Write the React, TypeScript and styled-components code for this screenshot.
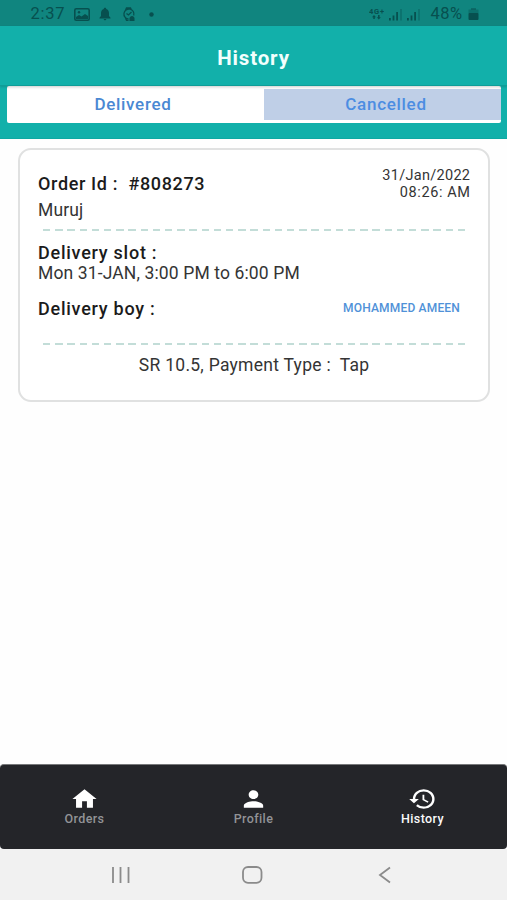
import React from "react";
import styled, { createGlobalStyle } from "styled-components";
import { MdHome, MdPerson, MdHistory } from "react-icons/md";

const GlobalStyle = createGlobalStyle`
  * { box-sizing: border-box; }
  body { margin: 0; background: #fff; font-family: Roboto, "Liberation Sans", sans-serif; }
`;

const Screen = styled.div`
  display: flex;
  flex-direction: column;
  width: 507px;
  height: 900px;
  overflow: hidden;
  background: #fefefe;
`;

const StatusBar = styled.div`
  display: flex;
  justify-content: space-between;
  flex: none;
  height: 26px;
  padding: 2px 28.5px 0 30.5px;
  background: #10857f;
  color: #07504f;
`;

const StatusGroup = styled.div`
  display: flex;
  align-items: center;
  height: 24px;
`;

const StatusText = styled.span<{ $spacing: number }>`
  font-size: 16.5px;
  line-height: 24px;
  letter-spacing: ${(p) => p.$spacing}px;
  white-space: pre;
`;

const StatusIcon = styled.svg<{ $left: number }>`
  display: block;
  flex: none;
  margin-left: ${(p) => p.$left}px;
`;

const Header = styled.header`
  flex: none;
  height: 113px;
  background: #12b0aa;
  border-bottom: 1px solid #0fa8a3;
`;

const TitleBar = styled.div`
  height: 60px;
  padding-top: 20px;
  text-align: center;
  border-bottom: 1px solid #0f9d98;
  box-shadow: 0 1px 2px rgba(0, 0, 0, 0.15);
`;

const Title = styled.h1`
  margin: 0;
  color: #f2fffd;
  font-size: 20.5px;
  font-weight: 700;
  line-height: 24px;
  letter-spacing: 0.85px;
`;

const Tabs = styled.div`
  display: flex;
  width: 494px;
  height: 37px;
  margin-left: 7px;
  padding: 3px 0;
  border-radius: 2px;
  background: #fff;
  box-shadow: inset 0 3px 3px -2px rgba(0, 0, 0, 0.2);
`;

const Tab = styled.button<{ $active?: boolean }>`
  width: ${(p) => (p.$active ? 237 : 257)}px;
  height: 31px;
  padding: ${(p) => (p.$active ? "0 0 2px 7px" : "0 5px 2px 0")};
  border: 0;
  background: ${(p) => (p.$active ? "#bfcfe7" : "transparent")};
  color: ${(p) => (p.$active ? "#4c8de2" : "#4a88d3")};
  font: 500 17px/28px Roboto, sans-serif;
  letter-spacing: 0.7px;
`;

const Content = styled.main`
  flex: 1;
  padding: 9px 17px 0 18px;
`;

const Card = styled.article`
  height: 254px;
  padding: 15px 18px 0;
  border: 2px solid #e0e1e1;
  border-radius: 13px;
  background: #fff;
`;

const Row = styled.div<{ $height: number }>`
  display: flex;
  justify-content: space-between;
  height: ${(p) => p.$height}px;
`;

const OrderInfo = styled.div`
  padding-top: 7px;
`;

const DateInfo = styled.div`
  display: flex;
  flex-direction: column;
  align-items: flex-end;
  padding-top: 1.5px;
`;

const Line = styled.div<{
  $size?: number;
  $height?: number;
  $spacing: number;
  $bold?: boolean;
}>`
  color: ${(p) => (p.$bold ? "#1b1b1b" : "#343434")};
  font-size: ${(p) => p.$size ?? 17.5}px;
  font-weight: ${(p) => (p.$bold ? 500 : 400)};
  line-height: ${(p) => p.$height ?? 20}px;
  letter-spacing: ${(p) => p.$spacing}px;
  margin-right: -${(p) => p.$spacing}px;
  white-space: pre;
`;

const DashedRule = styled.div`
  width: 422px;
  height: 2px;
  margin-left: 5px;
  background: repeating-linear-gradient(90deg, #c3ddd8 0 7.4px, transparent 7.4px 12.2px);
`;

const Slot = styled.div`
  padding-top: 12px;
  height: 67.5px;
`;

const Courier = styled.span`
  padding-right: 10px;
  color: #4f91d8;
  font-size: 12px;
  font-weight: 500;
  line-height: 18px;
  letter-spacing: 0.18px;
`;

const Payment = styled.div`
  display: flex;
  justify-content: center;
  padding-top: 10px;
`;

const BottomNav = styled.nav`
  display: grid;
  grid-template-columns: repeat(3, 1fr);
  flex: none;
  height: 85px;
  padding-top: 21px;
  border-top: 1px solid #77787a;
  border-radius: 4px;
  background: #242529;
`;

const NavItem = styled.a<{ $active?: boolean }>`
  display: flex;
  flex-direction: column;
  align-items: center;
  color: ${(p) => (p.$active ? "#fafafa" : "#929396")};
  font-size: 12.5px;
  font-weight: 500;
  line-height: 14px;
  letter-spacing: 0.4px;

  svg {
    display: block;
    width: 29px;
    height: 26px;
    color: #fff;
  }
`;

const SystemBar = styled.div`
  display: flex;
  flex: none;
  height: 51px;
  padding: 17px 0 0 111px;
  background: #f1f1f1;
`;

const SystemKey = styled.svg<{ $gap?: number }>`
  display: block;
  flex: none;
  margin-left: ${(p) => p.$gap ?? 0}px;
  fill: none;
  stroke: #8b8b8b;
  stroke-width: 1.8;
`;

const Signal = ({ left }: { left: number }) => (
  <StatusIcon $left={left} width="14" height="13" viewBox="0 0 14 13" fill="currentColor">
    <rect x="0" y="10" width="1.8" height="2.5" />
    <rect x="3.6" y="7.5" width="1.8" height="5" />
    <rect x="7.2" y="4" width="1.8" height="8.5" />
    <rect x="11.2" y="1" width="1.6" height="11.5" opacity=".4" />
  </StatusIcon>
);

export default function App() {
  return (
    <>
      <GlobalStyle />
      <Screen>
        <StatusBar>
          <StatusGroup>
            <StatusText $spacing={0.75}>2:37</StatusText>
            <StatusIcon $left={8.5} width="16" height="13" viewBox="0 0 16 13">
              <rect x=".8" y=".8" width="14.4" height="11.4" rx="1.5" fill="none" stroke="currentColor" strokeWidth="1.6" />
              <path d="M2 11V9l3-2 2.5 1.5L11 6l3 2v3z" fill="currentColor" />
              <circle cx="5" cy="4.2" r="1.2" fill="currentColor" />
            </StatusIcon>
            <StatusIcon $left={9.5} width="12" height="14" viewBox="0 0 12 14" fill="currentColor">
              <path d="M6 .7c.8 0 1.2.5 1.2 1.2C9 2.5 10 4 10 6v3l1.5 1.7v.7H.5v-.7L2 9V6c0-2 1-3.5 2.8-4.1C4.8 1.2 5.2.7 6 .7zM4.6 12h2.8c-.2.9-.7 1.3-1.4 1.3s-1.2-.4-1.4-1.3z" />
            </StatusIcon>
            <StatusIcon $left={10.5} width="14" height="15" viewBox="0 0 14 15" fill="none" stroke="currentColor" strokeWidth="1.3">
              <path d="M11.7 8.5A5 5 0 1 0 6.5 12M3.5 3l1-2h4l1 2M3.5 11l1 2.3h2M4.5 6.5l2 1.5 3-3" />
              <path d="M7.5 14v-2.5c0-3.5 5-3.5 5 0V14z" fill="currentColor" stroke="none" />
            </StatusIcon>
            <StatusIcon $left={13.5} width="5" height="5" viewBox="0 0 5 5" fill="currentColor">
              <circle cx="2.5" cy="2.5" r="2.2" />
            </StatusIcon>
          </StatusGroup>
          <StatusGroup>
            <StatusIcon $left={0} width="15" height="14" viewBox="0 0 15 14" fill="currentColor">
              <text x="0" y="6.5" fontSize="7.5" fontWeight="700" fontFamily="Roboto" textLength="15">4G+</text>
              <path d="M5 8l2 2.3H5.8V12H4.3v-1.7H3zM9.8 12.5l-2-2.3H9V8h1.6v2.2h1.2z" />
            </StatusIcon>
            <Signal left={4.5} />
            <Signal left={4.5} />
            <StatusText $spacing={0.45}>{"  48%"}</StatusText>
            <StatusIcon $left={5} width="11" height="14" viewBox="0 0 11 14" fill="currentColor">
              <rect x="3" y="1" width="5" height="2" opacity=".5" />
              <rect x=".5" y="2.5" width="10" height="4" opacity=".4" />
              <rect x=".5" y="6" width="10" height="7" rx="1" />
            </StatusIcon>
          </StatusGroup>
        </StatusBar>
        <Header>
          <TitleBar>
            <Title>History</Title>
          </TitleBar>
          <Tabs>
            <Tab>Delivered</Tab>
            <Tab $active>Cancelled</Tab>
          </Tabs>
        </Header>
        <Content>
          <Card>
            <Row $height={64}>
              <OrderInfo>
                <Line $bold $size={18} $height={24} $spacing={0.65}>{"Order Id :  #808273"}</Line>
                <Line $height={28} $spacing={0.1}>Muruj</Line>
              </OrderInfo>
              <DateInfo>
                <Line $size={14.5} $height={17} $spacing={0.3}>31/Jan/2022</Line>
                <Line $size={14.5} $height={17} $spacing={0.6}>08:26: AM</Line>
              </DateInfo>
            </Row>
            <DashedRule />
            <Slot>
              <Line $bold $size={18} $spacing={0.75}>Delivery slot :</Line>
              <Line $spacing={0.13}>Mon 31-JAN, 3:00 PM to 6:00 PM</Line>
            </Slot>
            <Row $height={44.5}>
              <Line $bold $size={18} $spacing={0.75}>Delivery boy :</Line>
              <Courier>MOHAMMED AMEEN</Courier>
            </Row>
            <DashedRule />
            <Payment>
              <Line $spacing={0.27}>{"SR 10.5, Payment Type :  Tap"}</Line>
            </Payment>
          </Card>
        </Content>
        <BottomNav>
          <NavItem>
            <MdHome preserveAspectRatio="none" />
            Orders
          </NavItem>
          <NavItem>
            <MdPerson preserveAspectRatio="none" />
            Profile
          </NavItem>
          <NavItem $active>
            <MdHistory preserveAspectRatio="none" />
            History
          </NavItem>
        </BottomNav>
        <SystemBar>
          <SystemKey width="20" height="18" viewBox="0 0 20 18">
            <path d="M2 1v16M9.5 1v16M17.5 1v16" />
          </SystemKey>
          <SystemKey $gap={110} width="22" height="18" viewBox="0 0 22 18">
            <rect x="2" y="1" width="18.5" height="15.8" rx="5" />
          </SystemKey>
          <SystemKey $gap={115} width="14" height="18" viewBox="0 0 14 18">
            <path d="M12 1.5L2 9l10 7.5" />
          </SystemKey>
        </SystemBar>
      </Screen>
    </>
  );
}
